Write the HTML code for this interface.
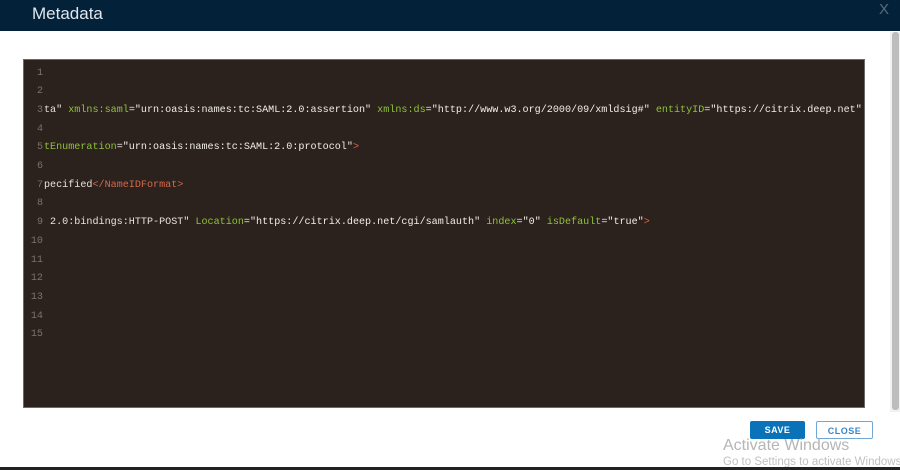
<!DOCTYPE html>
<html><head><style>
body{margin:0;width:900px;height:470px;overflow:hidden;background:#fff;font-family:"Liberation Sans",sans-serif;position:relative}
.hd{position:absolute;left:0;top:0;width:900px;height:31px;background:#03223a}
.hd span{position:absolute;left:32px;top:4px;color:#dfe6ec;font-size:17px}
.x{position:absolute;left:879px;top:1px;color:#5a6b7a;font-size:15px}
.sb{position:absolute;left:892px;top:32px;width:7px;height:378px;background:#bdbdbd;border-radius:3px}
.sbt{position:absolute;left:890px;top:32px;width:10px;height:380px;background:#f1f1f1}
.code{position:absolute;left:23px;top:59px;width:842px;height:349px;background:#2b211d;border:1px solid #6a6a6a;box-sizing:border-box;overflow:hidden;font-family:"Liberation Mono",monospace;font-size:10.1px}
.l{position:absolute;left:0;height:18px;white-space:pre;color:#e8e3dc}
.n{display:inline-block;width:19px;text-align:right;color:#7a746e;margin-right:1px}
.g{color:#8fc33a}.s{color:#f2ede6}.t{color:#d66a4a}
.btn{position:absolute;top:421px;height:18px;width:55px;font-size:9px;font-weight:bold;text-align:center;line-height:18px;letter-spacing:.5px;box-sizing:border-box;border-radius:2px}
.aw{position:absolute;left:723px;top:437px;color:#b5b5b5;font-size:16px}
.aw2{position:absolute;left:723px;top:456px;color:#c0c0c0;font-size:11.5px;white-space:nowrap}
.bot{position:absolute;left:0;top:467px;width:900px;height:3px;background:#222}
</style></head><body>
<div class="hd"><span>Metadata</span></div><div class="x">X</div>
<div class="sbt"></div><div class="sb"></div>
<div class="code">
<div class="l" style="top:8px"><span class="n">1</span></div>
<div class="l" style="top:26px"><span class="n">2</span></div>
<div class="l" style="top:45px"><span class="n">3</span>ta" <span class="g">xmlns:saml</span>=<span class="s">"urn:oasis:names:tc:SAML:2.0:assertion"</span> <span class="g">xmlns:ds</span>=<span class="s">"http://www.w3.org/2000/09/xmldsig#"</span> <span class="g">entityID</span>=<span class="s">"https://citrix.deep.net"</span></div>
<div class="l" style="top:64px"><span class="n">4</span></div>
<div class="l" style="top:82px"><span class="n">5</span><span class="g">tEnumeration</span>=<span class="s">"urn:oasis:names:tc:SAML:2.0:protocol"</span><span class="t">&gt;</span></div>
<div class="l" style="top:101px"><span class="n">6</span></div>
<div class="l" style="top:120px"><span class="n">7</span>pecified<span class="t">&lt;/NameIDFormat&gt;</span></div>
<div class="l" style="top:138px"><span class="n">8</span></div>
<div class="l" style="top:157px"><span class="n">9</span> 2.0:bindings:HTTP-POST" <span class="g">Location</span>=<span class="s">"https://citrix.deep.net/cgi/samlauth"</span> <span class="g">index</span>=<span class="s">"0"</span> <span class="g">isDefault</span>=<span class="s">"true"</span><span class="t">&gt;</span></div>
<div class="l" style="top:176px"><span class="n">10</span></div>
<div class="l" style="top:195px"><span class="n">11</span></div>
<div class="l" style="top:213px"><span class="n">12</span></div>
<div class="l" style="top:232px"><span class="n">13</span></div>
<div class="l" style="top:251px"><span class="n">14</span></div>
<div class="l" style="top:269px"><span class="n">15</span></div>
</div>
<div class="btn" style="left:750px;background:#0a72b8;color:#fff">SAVE</div>
<div class="btn" style="left:816px;width:57px;border:1px solid #6fa8d6;color:#3a87c4;background:#fff">CLOSE</div>
<div class="aw">Activate Windows</div>
<div class="aw2">Go to Settings to activate Windows.</div>
<div class="bot"></div>
</body></html>
